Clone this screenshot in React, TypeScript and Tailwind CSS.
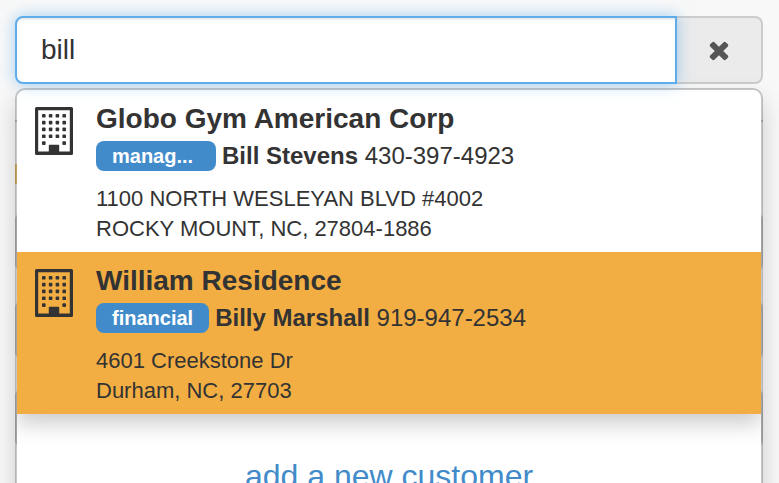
import { useState } from 'react';
import clsx from 'clsx';

interface Customer {
  id: number;
  name: string;
  role: string;
  contact: string;
  phone: string;
  street: string;
  city: string;
}

const customers: Customer[] = [
  {
    id: 1,
    name: 'Globo Gym American Corp',
    role: 'manag...',
    contact: 'Bill Stevens',
    phone: '430-397-4923',
    street: '1100 NORTH WESLEYAN BLVD #4002',
    city: 'ROCKY MOUNT, NC, 27804-1886'
  },
  {
    id: 2,
    name: 'William Residence',
    role: 'financial',
    contact: 'Billy Marshall',
    phone: '919-947-2534',
    street: '4601 Creekstone Dr',
    city: 'Durham, NC, 27703'
  }
];

const windowRows = [7, 13.8, 20.6, 27.5, 34.3];
const windowCols = [7, 13.8, 20.6, 27.4];

function BuildingIcon() {
  return (
    <svg viewBox="0 0 38 48" className="w-[38px] h-12 shrink-0" fill="currentColor" aria-hidden="true">
      <path
        fillRule="evenodd"
        d="M1.5 0h35A1.5 1.5 0 0 1 38 1.5v45a1.5 1.5 0 0 1-1.5 1.5h-35A1.5 1.5 0 0 1 0 46.5v-45A1.5 1.5 0 0 1 1.5 0zM3.2 3.2v41.4H13.800v-6a.8.8 0 0 1 .8-.8h8.800a.8.8 0 0 1 .8.8v6H34.800V3.200z"
      />
      {windowRows.map((y, row) =>
        windowCols
          .filter((_, col) => row < 4 || col === 0 || col === 3)
          .map(x => <rect key={`${x}-${y}`} x={x} y={y} width="3.6" height="3.6" rx="0.9" />)
      )}
    </svg>
  );
}

function ClearIcon() {
  return (
    <svg viewBox="0 0 1792 1792" className="w-7 h-7" fill="currentColor" aria-hidden="true">
      <path d="M1490 1322q0 40-28 68l-136 136q-28 28-68 28t-68-28l-294-294-294 294q-28 28-68 28t-68-28l-136-136q-28-28-28-68t28-68l294-294-294-294q-28-28-28-68t28-68l136-136q28-28 68-28t68 28l294 294 294-294q28-28 68-28t68 28l136 136q28 28 28 68t-28 68l-294 294 294 294q28 28 28 68z" />
    </svg>
  );
}

function CustomerRow({ customer, active, onHover }: { customer: Customer; active: boolean; onHover: () => void }) {
  // shortened roles take the full badge width
  const shortened = customer.role.endsWith('...');

  return (
    <li
      onMouseEnter={onHover}
      className={clsx('flex gap-[23px] px-[18px] pt-[11px] pb-2', active && 'bg-[#f2ae43]')}
    >
      <div className="pt-1.5">
        <BuildingIcon />
      </div>
      <div className="min-w-0">
        <h2 className="text-[28px] leading-9 font-bold">{customer.name}</h2>
        <div className="flex items-center gap-1.5 h-[38px] text-2xl whitespace-nowrap">
          <span
            className={clsx(
              'bg-[#428bca] text-white text-xl leading-[30px] font-bold rounded-lg px-4',
              shortened && 'w-[120px]'
            )}
          >
            {customer.role}
          </span>
          <p>
            <strong>{customer.contact}</strong> {customer.phone}
          </p>
        </div>
        <address className="not-italic text-[22px] leading-[30px] pt-[9px]">
          {customer.street}
          <br />
          {customer.city}
        </address>
      </div>
    </li>
  );
}

export default function App() {
  const [query, setQuery] = useState('bill');
  const [activeId, setActiveId] = useState(2);

  return (
    <main
      className="h-screen overflow-hidden bg-[#f8f8f8] pl-[15px] pr-4 pt-4 text-[#333]"
      style={{ fontFamily: '"Liberation Sans", Arial, sans-serif' }}
    >
      <div className="relative">
        <div className="flex h-[68px]">
          <input
            type="text"
            aria-label="Customer"
            value={query}
            onChange={e => setQuery(e.target.value)}
            className="relative z-10 flex-1 min-w-0 bg-white border-2 border-[#5faceb] rounded-l-lg px-6 text-[28px] outline-none shadow-[inset_0_2px_2px_rgba(0,0,0,0.075),0_0_16px_rgba(102,175,233,0.6)]"
          />
          <button
            type="button"
            aria-label="Clear"
            onClick={() => setQuery('')}
            className="flex items-center justify-center w-[86px] bg-[#ebebeb] border-2 border-l-0 border-[#ccc] rounded-r-lg text-[#555]"
          >
            <ClearIcon />
          </button>
        </div>

        {/* Suggestions */}
        <div className="absolute inset-x-0 top-full mt-1 h-screen overflow-hidden bg-white bg-clip-padding border-2 border-black/20 rounded-[10px] shadow-[0_12px_24px_rgba(0,0,0,0.175)]">
          <ul className="shadow-[0_10px_20px_rgba(0,0,0,0.2)]">
            {customers.map(customer => (
              <CustomerRow
                key={customer.id}
                customer={customer}
                active={customer.id === activeId}
                onHover={() => setActiveId(customer.id)}
              />
            ))}
          </ul>
          <p className="pt-11 text-center text-[32px] leading-9">
            <a href="#new" className="text-[#428bca]">add a new customer</a>
          </p>
        </div>
      </div>

      {/* Form below the search box */}
      <hr className="mt-9 border-t-2 border-[#ccc]" />
      <div className="mt-[42px] w-24 h-5 bg-[#f3c67a]" />
      <div className="flex flex-col gap-7 mt-7">
        <input aria-label="Name" className="h-[60px] bg-white border-2 border-[#ccc] rounded-lg" />
        <input aria-label="Phone" className="h-[60px] bg-white border-2 border-[#ccc] rounded-lg" />
        <input aria-label="Address" className="h-[60px] bg-white border-2 border-[#ccc] rounded-lg" />
      </div>
    </main>
  );
}
